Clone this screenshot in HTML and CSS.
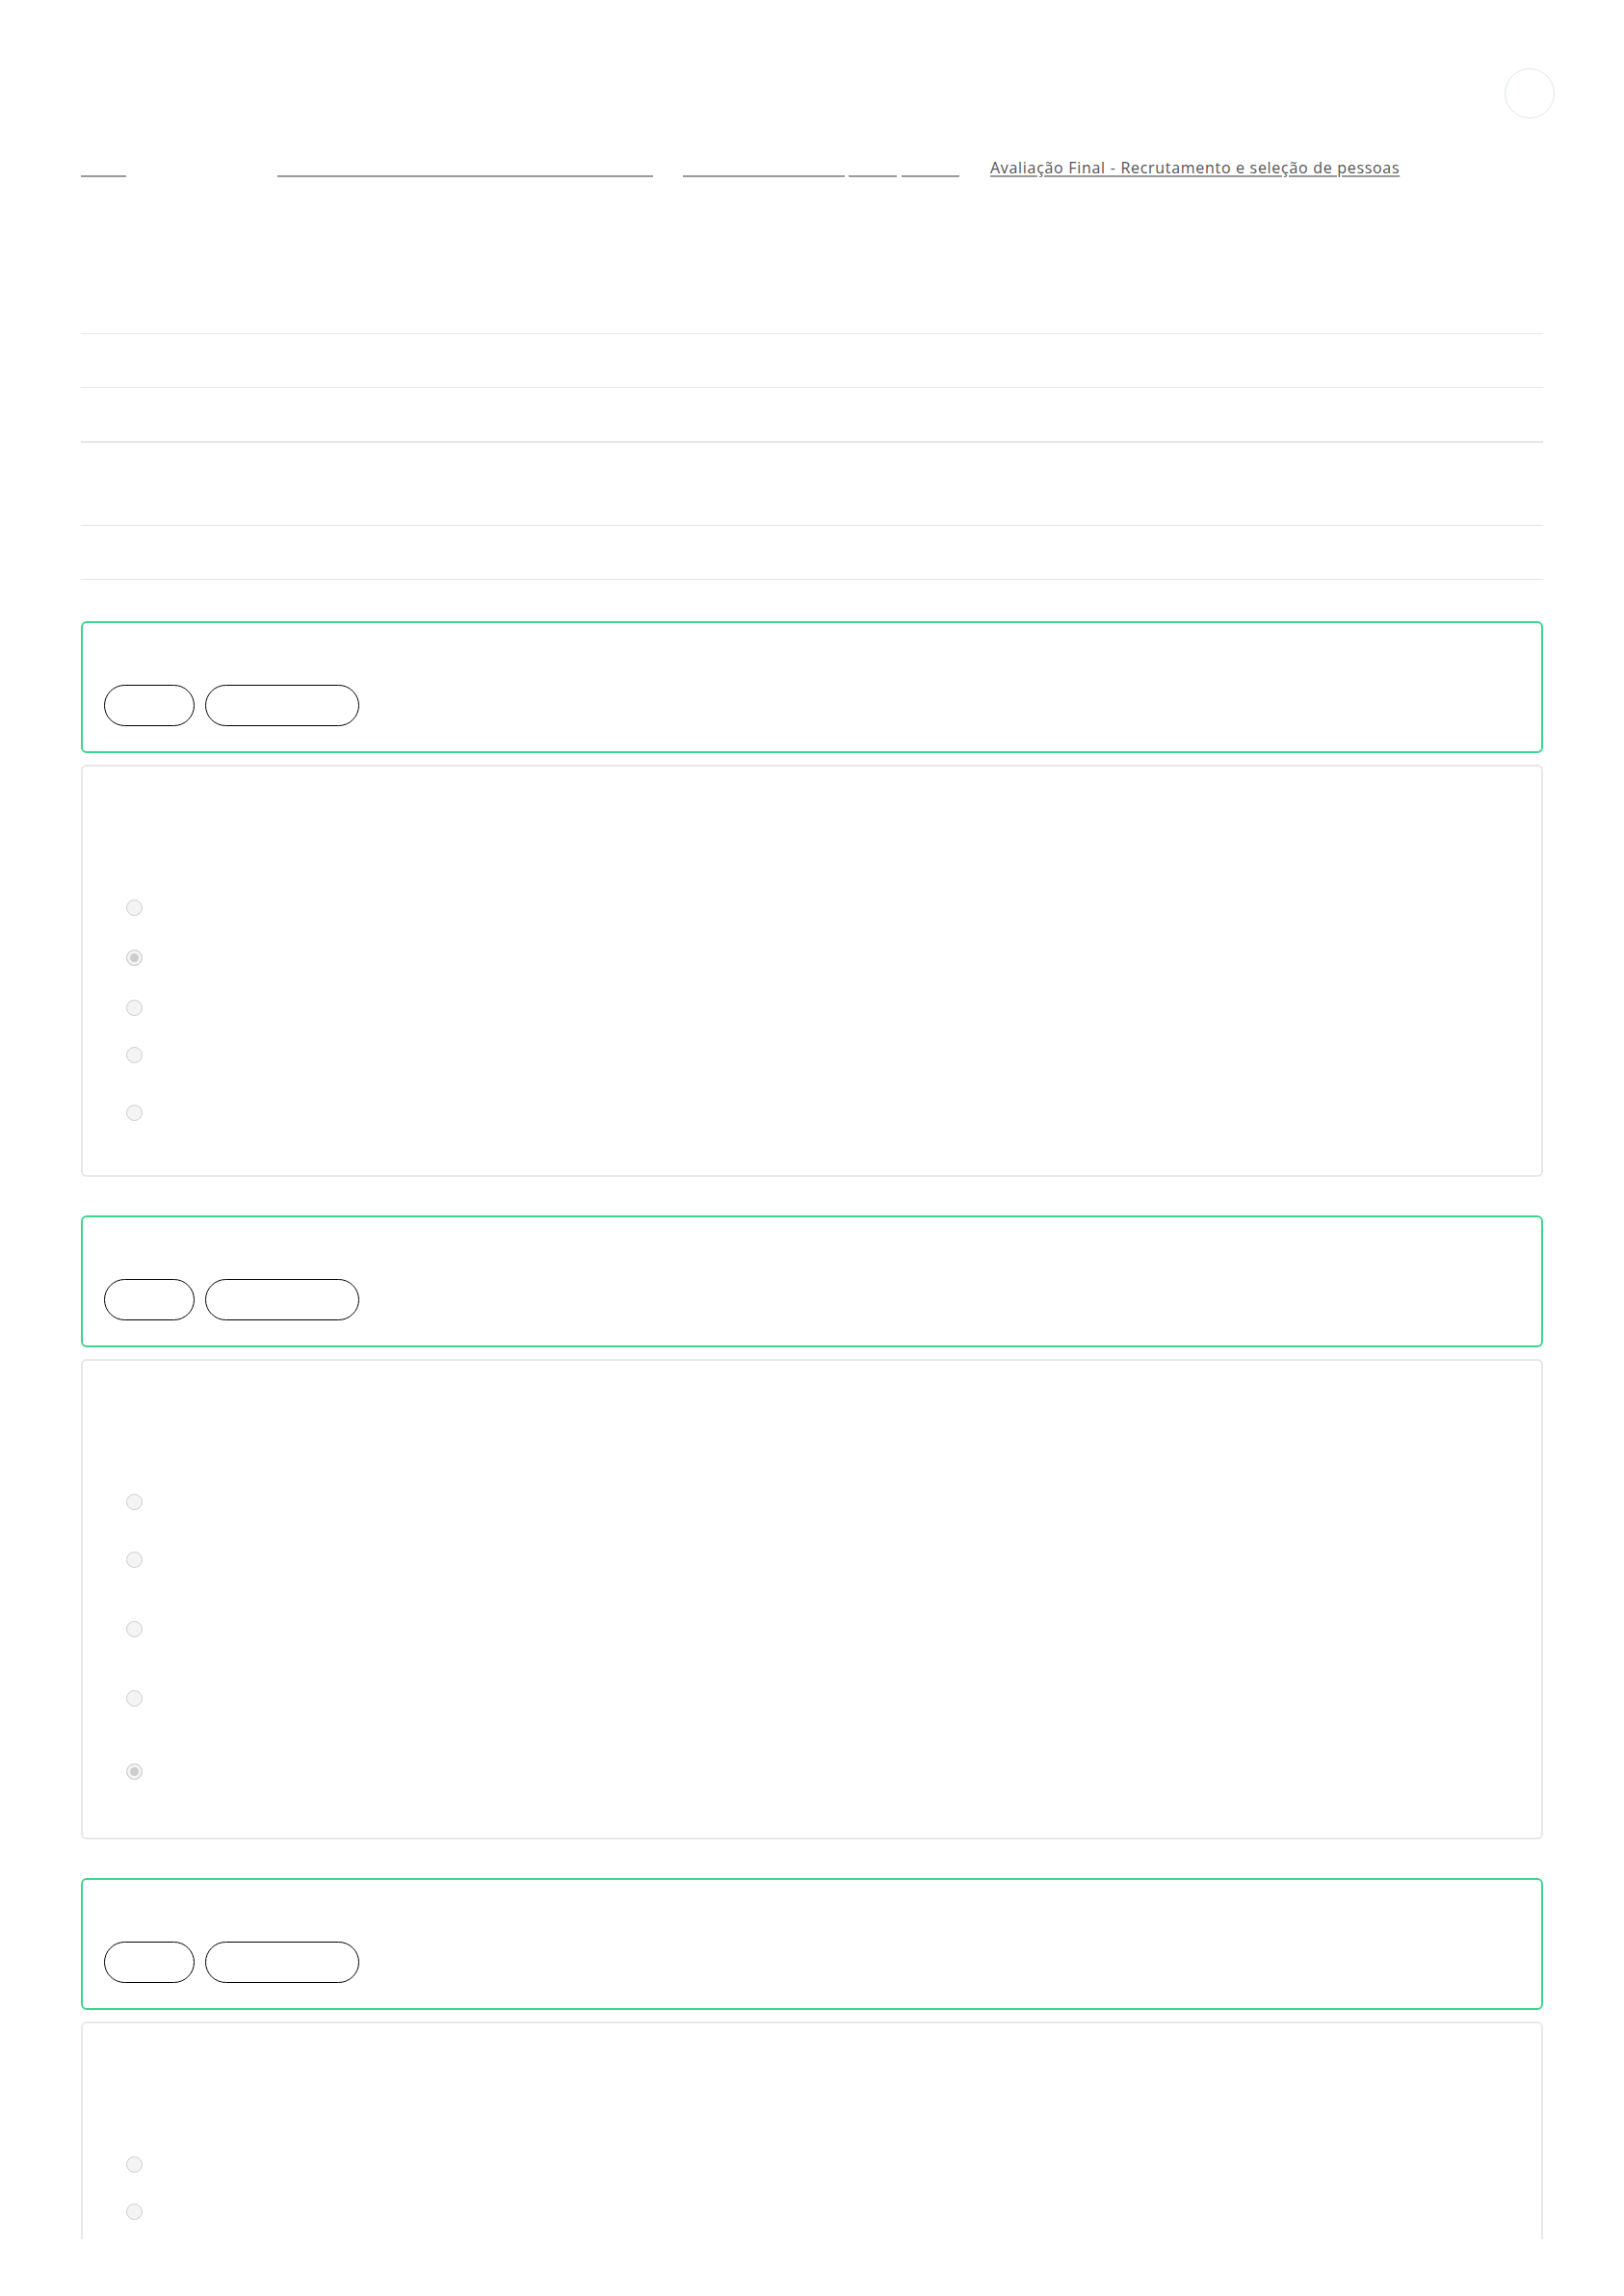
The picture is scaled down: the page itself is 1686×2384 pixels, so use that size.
FILE: index.html
```html
<!DOCTYPE html>
<html lang="pt-BR">
<head>
  <meta charset="UTF-8">
  <meta name="viewport" content="width=device-width, initial-scale=1.0">
  <title>Avaliação Final - Recrutamento e seleção de pessoas</title>
  <link rel="stylesheet" href="styles.css">
</head>
<body>

<div class="page">
  <!-- Top bar -->
  <header class="topbar">
    <div class="avatar"></div>
  </header>

  <!-- Breadcrumb -->
  <nav class="crumbs">
    <a class="crumb c1" href="#"></a>
    <a class="crumb c2" href="#"></a>
    <a class="crumb c3" href="#"></a>
    <a class="crumb c4" href="#"></a>
    <a class="crumb c5" href="#"></a>
    <a class="crumb-title" href="#">Avaliação Final - Recrutamento e seleção de pessoas</a>
  </nav>

  <!-- Attempt summary -->
  <div class="summary">
    <div class="summary-row"></div>
    <div class="summary-row"></div>
    <div class="summary-row tall"></div>
    <div class="summary-row last"></div>
  </div>

  <!-- Question 1 -->
  <section class="question">
    <div class="q-head">
      <span class="pill short"></span>
      <span class="pill long"></span>
    </div>
    <div class="q-body">
      <div class="opt h52"><input type="radio" name="q1" disabled></div>
      <div class="opt h52"><input type="radio" name="q1" checked disabled></div>
      <div class="opt h49"><input type="radio" name="q1" disabled></div>
      <div class="opt h60"><input type="radio" name="q1" disabled></div>
      <div class="opt h33"><input type="radio" name="q1" disabled></div>
    </div>
  </section>

  <!-- Question 2 -->
  <section class="question">
    <div class="q-head">
      <span class="pill short"></span>
      <span class="pill long"></span>
    </div>
    <div class="q-body">
      <div class="opt h60"><input type="radio" name="q2" disabled></div>
      <div class="opt h72"><input type="radio" name="q2" disabled></div>
      <div class="opt h72"><input type="radio" name="q2" disabled></div>
      <div class="opt h76"><input type="radio" name="q2" disabled></div>
      <div class="opt h37"><input type="radio" name="q2" checked disabled></div>
    </div>
  </section>

  <!-- Question 3 -->
  <section class="question">
    <div class="q-head">
      <span class="pill short"></span>
      <span class="pill long"></span>
    </div>
    <div class="q-body">
      <div class="opt h49"><input type="radio" name="q3" disabled></div>
      <div class="opt h49"><input type="radio" name="q3" disabled></div>
      <div class="opt h49"><input type="radio" name="q3" disabled></div>
      <div class="opt h49"><input type="radio" name="q3" disabled></div>
    </div>
  </section>
</div>

</body>
</html>
```

FILE: styles.css
```css
body {
  margin: 0;
  padding: 0;
  background-color: #fff;
  font-family: 'Open Sans', 'Liberation Sans', sans-serif;
  color: #333;
}

.page {
  height: 2325px;
  overflow: hidden;
  padding: 0 84px;
}

/* top bar */
.topbar {
  display: flex;
  justify-content: flex-end;
  padding-top: 71px;
  margin-right: -12px;
}

.avatar {
  width: 50px;
  height: 50px;
  border: 1px solid #dfe5ef;
  border-radius: 50%;
}

/* breadcrumb */
.crumbs {
  display: flex;
  align-items: flex-end;
  height: 24px;
  margin-top: 39px;
}

.crumb {
  display: block;
  height: 2px;
  margin-bottom: 2px;
  background-color: #9b9b9b;
}

.c1 { width: 47px; }
.c2 { width: 390px; margin-left: 157px; }
.c3 { width: 168px; margin-left: 31px; }
.c4 { width: 50px; margin-left: 4px; }
.c5 { width: 60px; margin-left: 5px; }

.crumb-title {
  margin-left: 32px;
  font-size: 16px;
  line-height: 24px;
  letter-spacing: 0.7px;
  color: #555;
  text-decoration: underline;
  text-decoration-color: #9b9b9b;
  text-decoration-thickness: 2px;
  text-underline-offset: 2px;
}

/* summary table */
.summary {
  margin-top: 160px;
}

.summary-row {
  height: 55px;
  border-top: 1px solid #e6e6e6;
}

.summary-row.tall {
  height: 85px;
  border-top-width: 2px;
}

.summary-row.last {
  border-bottom: 1px solid #e6e6e6;
}

/* questions */
.question {
  margin-top: 40px;
}

.summary + .question {
  margin-top: 43px;
}

.q-head {
  display: flex;
  gap: 11px;
  padding: 64px 21px 26px 22px;
  border: 2px solid #3dd68c;
  border-radius: 6px;
}

.pill {
  display: block;
  height: 41px;
  border: 1px solid #000;
  border-radius: 22px;
}

.pill.short { width: 92px; }
.pill.long { width: 158px; }

.q-body {
  margin-top: 12px;
  padding: 138px 45px 40px;
  border: 2px solid #e8e8e8;
  border-radius: 6px;
}

.opt {
  display: flex;
  align-items: flex-start;
}

.h33 { height: 33px; }
.h37 { height: 37px; }
.h49 { height: 49px; }
.h52 { height: 52px; }
.h60 { height: 60px; }
.h72 { height: 72px; }
.h76 { height: 76px; }

input[type="radio"] {
  appearance: none;
  width: 17px;
  height: 17px;
  margin: 0;
  border: 1px solid #cdcdcd;
  border-radius: 50%;
  background-color: #f4f4f4;
}

input[type="radio"]:checked {
  background-color: #cdcdcd;
  box-shadow: inset 0 0 0 3px #f4f4f4;
}
```
